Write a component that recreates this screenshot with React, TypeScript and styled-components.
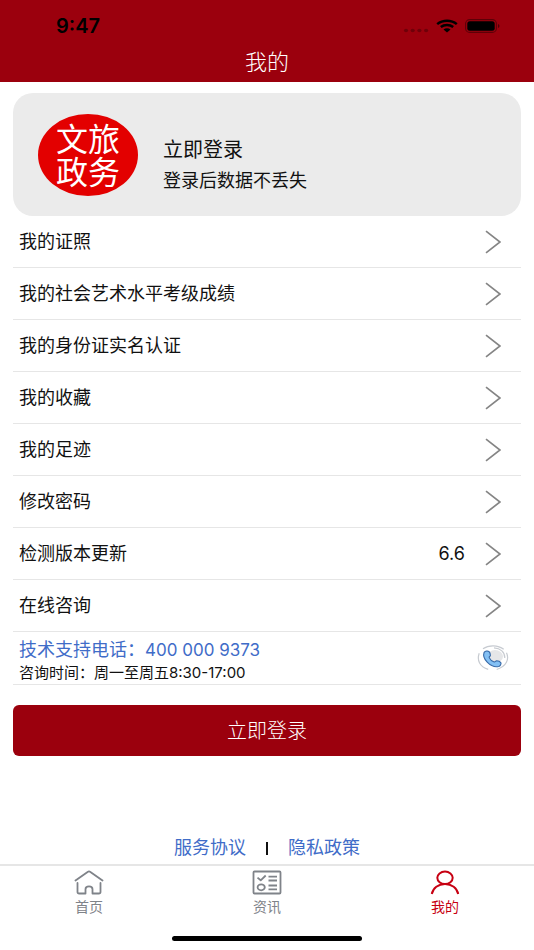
import React from "react";
import styled, { createGlobalStyle } from "styled-components";

const GlobalStyle = createGlobalStyle`
  *, *::before, *::after { box-sizing: border-box; }
  body {
    margin: 0;
    background: #fff;
    color: #111;
    font-family: Inter, "Noto Sans CJK SC", sans-serif;
    font-size: 18px;
    line-height: 24px;
  }
  button { font: inherit; color: inherit; background: none; border: 0; padding: 0; cursor: pointer; }
  a { color: inherit; text-decoration: none; }
  svg { display: block; flex: none; }
`;

const Screen = styled.div`
  display: flex;
  flex-direction: column;
  min-height: 100vh;
`;

const Header = styled.header`
  background: #9b000d;
  padding: 10px 0 5px;
`;

const StatusBar = styled.div`
  display: flex;
  align-items: center;
  justify-content: space-between;
  height: 32px;
  padding: 0 34px 0 56px;
  color: #000;
`;

const Clock = styled.time`
  font-size: 20px;
  font-weight: 600;
`;

const StatusIcons = styled.div`
  display: flex;
  align-items: center;
  gap: 7px;
`;

const PageTitle = styled.h1`
  margin: 5px 0 0;
  font-size: 22px;
  font-weight: 300;
  line-height: 30px;
  text-align: center;
  color: #fff;
`;

const Main = styled.main`
  flex: 1;
  display: flex;
  flex-direction: column;
  padding: 11px 13px 4px;
`;

const ProfileCard = styled.button`
  display: flex;
  align-items: center;
  gap: 25px;
  min-height: 123px;
  padding: 0 25px;
  border-radius: 20px;
  background: #ebebeb;
  text-align: left;
`;

const Emblem = styled.span`
  display: flex;
  align-items: center;
  justify-content: center;
  width: 100px;
  height: 82px;
  padding-top: 2px;
  border-radius: 50%;
  background: #e30000;
  color: #fff;
`;

const EmblemText = styled.span`
  width: 64px;
  font-size: 32px;
  line-height: 33px;
  word-break: break-all;
`;

const ProfileText = styled.span`
  display: grid;
  gap: 7px;
  padding-top: 22px;
`;

const ProfileName = styled.span`
  font-size: 20px;
`;

const List = styled.ul`
  margin: 0;
  padding: 0;
  list-style: none;
`;

const ListItem = styled.li`
  border-bottom: 1px solid #e6e6e6;
`;

const RowButton = styled.button`
  display: flex;
  align-items: center;
  width: 100%;
  height: 51px;
  padding: 0 20px 0 6px;
  text-align: left;
`;

const RowLabel = styled.span`
  flex: 1;
`;

const RowValue = styled.span`
  margin-right: 20px;
`;

const SupportRow = styled.a`
  display: flex;
  align-items: center;
  justify-content: space-between;
  height: 52px;
  padding: 0 12px 0 6px;
`;

const SupportText = styled.span`
  padding-top: 6px;
`;

const SupportPhone = styled.span`
  display: block;
  color: #3f6cc8;
`;

const PhoneNumber = styled.span`
  font-size: 17px;
`;

const SupportHours = styled.span`
  display: block;
  font-size: 15px;
  line-height: 22px;
`;

const LoginButton = styled.button`
  height: 51px;
  margin-top: 20px;
  border-radius: 6px;
  background: #9b000d;
  color: #fff;
  font-size: 20px;
  font-weight: 300;
`;

const Policies = styled.div`
  display: flex;
  justify-content: center;
  gap: 20px;
  margin-top: auto;
`;

const PolicyLink = styled.a`
  color: #3f6cc8;
`;

const Divider = styled.span`
  width: 2px;
  height: 13px;
  align-self: center;
  background: #111;
`;

const TabBar = styled.nav`
  border-top: 2px solid #e6e6e6;
`;

const Tabs = styled.div`
  display: grid;
  grid-template-columns: repeat(3, 1fr);
`;

const Tab = styled.a<{ $active?: boolean }>`
  display: flex;
  flex-direction: column;
  align-items: center;
  gap: 2px;
  padding-top: 4px;
  color: ${({ $active }) => ($active ? "#c70012" : "#7f8389")};
  font-size: 14px;
  line-height: 20px;
`;

const HomeIndicator = styled.div`
  width: 190px;
  height: 5px;
  margin: 19px auto 9px;
  border-radius: 3px;
  background: #000;
`;

const SignalDots = () => (
  <svg width="26" height="20" viewBox="0 0 26 20" fill="#000" opacity="0.28">
    {[3, 9.7, 16.4, 23.1].map((x) => (
      <ellipse key={x} cx={x} cy="14.5" rx="2.1" ry="1.8" />
    ))}
  </svg>
);

const Wifi = () => (
  <svg width="22" height="14" viewBox="0 0 22 14" fill="none" stroke="#000" strokeWidth="2.5">
    <path d="M1.2 5.1C6.7.5 15.3.5 20.8 5.1" />
    <path d="M4.8 8.1c3.5-2.8 8.9-2.8 12.4 0" />
    <path d="M7.5 10.4c2-1.6 5-1.6 7 0L11 13.6z" fill="#000" stroke="none" />
  </svg>
);

const Battery = () => (
  <svg width="35" height="14" viewBox="0 0 35 14">
    <rect x=".6" y=".6" width="30.8" height="12.8" rx="4" fill="none" stroke="#000" strokeOpacity=".4" strokeWidth="1.1" />
    <rect x="2.3" y="2.3" width="27.4" height="9.4" rx="2.5" />
    <path d="M33 5v4c2-.8 2-3.2 0-4z" opacity=".5" />
  </svg>
);

const Chevron = () => (
  <svg width="16" height="24" viewBox="0 0 16 24" fill="none" stroke="#858585" strokeWidth="1.7">
    <path d="M1 1.2 15 12 1 22.8" />
  </svg>
);

const PhoneIcon = () => (
  <svg width="32" height="26" viewBox="0 0 32 26" fill="none">
    <ellipse cx="18" cy="11.5" rx="8" ry="6.5" fill="#e5e6e8" />
    <g stroke="#c7cbd1" strokeWidth="1.2">
      <path d="M6 3.7C11.5-.2 21-.3 26.7 4.3" />
      <path d="M17 2.9c6.4.3 11 4.3 10.8 10.2" />
      <path d="M29.5 7.8c2.9 6.3.2 13.5-9.8 16.7" />
      <path d="M2.2 8.2C-.3 15.4 2.7 21.8 11.2 24.4" />
    </g>
    <path
      d="M7.1 7.4c1.2-1.3 3.6-1.7 4.8-.9.9.7 1.5 2.8 1.5 4-.1 1-1.6 1.2-1.2 2.1.8 2 2.7 3.5 5 4.3 1.2.3 1.2-1.1 2.5-1.2 1.3 0 3.5 1 4.1 1.9.8 1.2-.7 3.5-2.1 3.9-4 .9-8.6-1.4-11.5-4.4C7.6 14.5 6 10.4 7.1 7.4z"
      fill="#83c0f4"
      stroke="#3669a8"
      strokeWidth="1.1"
    />
  </svg>
);

const HomeIcon = () => (
  <svg width="30" height="25" viewBox="0 0 30 25" fill="none" stroke="currentColor" strokeWidth="1.8" strokeLinecap="round" strokeLinejoin="round">
    <path d="M1.5 10.5 13.6 1.9q1.4-.9 2.800 0L28.500 10.500" />
    <path d="M3.500 13v9q0 1.500 1.700 1.500h6.300v-4.300c0-3.700 7-3.700 7 0v4.300h6.300q1.700 0 1.700-1.500v-9" />
  </svg>
);

const NewsIcon = () => (
  <svg width="30" height="25" viewBox="0 0 30 25" fill="none" stroke="currentColor" strokeWidth="1.8" strokeLinejoin="round">
    <rect x="1.500" y="1.500" width="27" height="22" rx="1" />
    <path d="m5.500 7.600 3.200 2.700 5-4.800M16.500 6.700h8.500M16.500 10.500h8.500M16.500 15.500h8.500M16.500 19.300h8.500" />
    <ellipse cx="9.200" cy="17.300" rx="3.600" ry="3" />
  </svg>
);

const PersonIcon = () => (
  <svg width="30" height="25" viewBox="0 0 30 25" fill="none" stroke="currentColor" strokeWidth="2">
    <ellipse cx="15" cy="7.8" rx="7.700" ry="6.200" />
    <path d="M1.800 24C3 18 8.200 14 15 14S27 18 28.200 24" />
  </svg>
);

const rows: { label: string; value?: string }[] = [
  { label: "我的证照" },
  { label: "我的社会艺术水平考级成绩" },
  { label: "我的身份证实名认证" },
  { label: "我的收藏" },
  { label: "我的足迹" },
  { label: "修改密码" },
  { label: "检测版本更新", value: "6.6" },
  { label: "在线咨询" },
];

const tabs = [
  { label: "首页", href: "#home", Icon: HomeIcon },
  { label: "资讯", href: "#news", Icon: NewsIcon },
  { label: "我的", href: "#mine", Icon: PersonIcon, active: true },
];

export default function App() {
  return (
    <Screen lang="zh-CN">
      <GlobalStyle />
      <Header>
        <StatusBar>
          <Clock>9:47</Clock>
          <StatusIcons>
            <SignalDots />
            <Wifi />
            <Battery />
          </StatusIcons>
        </StatusBar>
        <PageTitle>我的</PageTitle>
      </Header>
      <Main>
        <ProfileCard type="button">
          <Emblem>
            <EmblemText>文旅政务</EmblemText>
          </Emblem>
          <ProfileText>
            <ProfileName>立即登录</ProfileName>
            <span>登录后数据不丢失</span>
          </ProfileText>
        </ProfileCard>
        <List>
          {rows.map(({ label, value }) => (
            <ListItem key={label}>
              <RowButton type="button">
                <RowLabel>{label}</RowLabel>
                {value && <RowValue>{value}</RowValue>}
                <Chevron />
              </RowButton>
            </ListItem>
          ))}
          <ListItem>
            <SupportRow href="tel:4000009373">
              <SupportText>
                <SupportPhone>
                  技术支持电话：<PhoneNumber>400 000 9373</PhoneNumber>
                </SupportPhone>
                <SupportHours>咨询时间：周一至周五8:30-17:00</SupportHours>
              </SupportText>
              <PhoneIcon />
            </SupportRow>
          </ListItem>
        </List>
        <LoginButton type="button">立即登录</LoginButton>
        <Policies>
          <PolicyLink href="#terms">服务协议</PolicyLink>
          <Divider />
          <PolicyLink href="#privacy">隐私政策</PolicyLink>
        </Policies>
      </Main>
      <TabBar>
        <Tabs>
          {tabs.map(({ label, href, Icon, active }) => (
            <Tab key={label} href={href} $active={active} aria-current={active ? "page" : undefined}>
              <Icon />
              {label}
            </Tab>
          ))}
        </Tabs>
        <HomeIndicator />
      </TabBar>
    </Screen>
  );
}
